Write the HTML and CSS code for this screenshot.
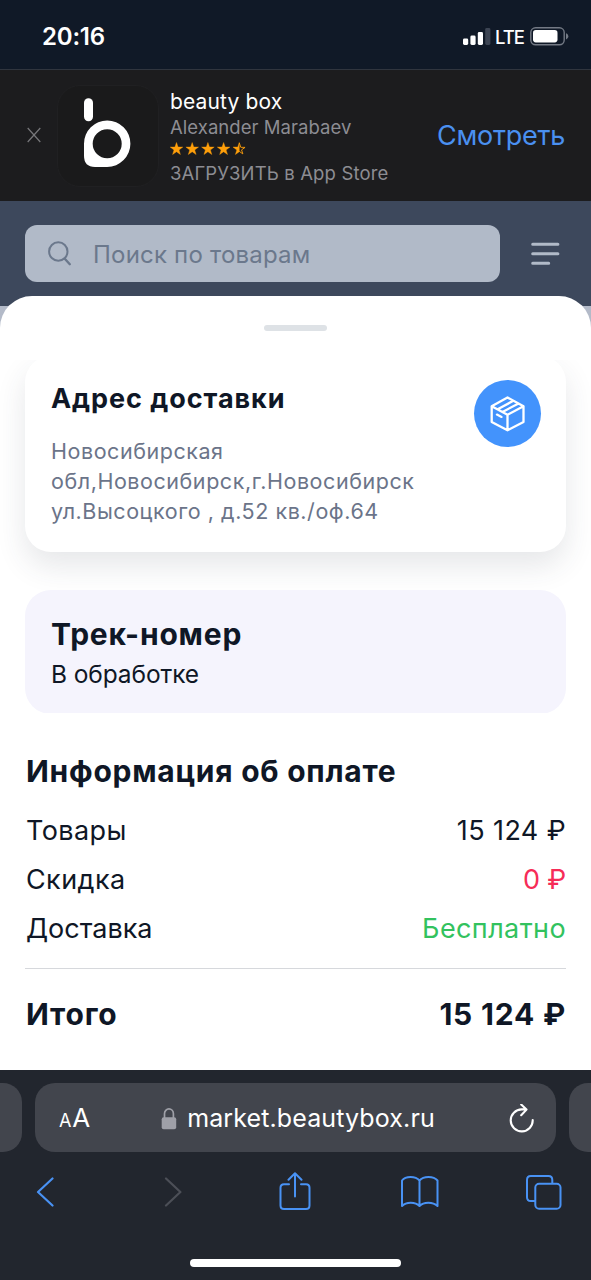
FILE: index.html
```html
<!DOCTYPE html>
<html lang="ru">
<head>
<meta charset="utf-8">
<title>beauty box</title>
<link rel="stylesheet" href="styles.css">
</head>
<body>
<div class="phone">
  <header class="status">
    <span class="clock">20:16</span>
    <div class="indicators">
      <svg class="signal" width="28" height="18" viewBox="0 0 28 18">
        <rect x="0" y="10.5" width="5.2" height="6.5" rx="1.4" fill="#fff"/>
        <rect x="7.4" y="7.5" width="5.2" height="9.5" rx="1.4" fill="#fff"/>
        <rect x="14.8" y="4" width="5.2" height="13" rx="1.4" fill="#fff"/>
        <rect x="22.2" y="0" width="5.2" height="17" rx="1.4" fill="#3c4453"/>
      </svg>
      <span class="network">LTE</span>
      <svg class="battery" width="39" height="19" viewBox="0 0 39 19">
        <rect x=".8" y=".8" width="33.4" height="17" rx="4.8" fill="none" stroke="#747a85" stroke-width="1.4"/>
        <rect x="3" y="3" width="24.5" height="12.4" rx="2.8" fill="#fff"/>
        <path d="M36 6.2c1.6.6 2.3 1.8 2.3 3.1s-.7 2.5-2.3 3.1z" fill="#747a85"/>
      </svg>
    </div>
  </header>

  <section class="banner">
    <svg class="close" width="14" height="16" viewBox="0 0 14 16"><path d="M.7 1l12.6 14M13.3 1L.7 15" stroke="#77777a" stroke-width="1.2" fill="none"/></svg>
    <div class="app-icon">
      <svg width="100" height="100" viewBox="0 0 100 100">
        <rect x="26" y="12.200" width="9" height="23" rx="4.500" fill="#fff"/>
        <path fill="#fff" fill-rule="evenodd" d="M49.200 34.500a23.200 23.200 0 0 1 0 46.400H37Q26 80.900 26 69.700V57.700A23.200 23.200 0 0 1 49.200 34.500zM49.200 43.200a14.500 14.500 0 1 0 0 29a14.500 14.500 0 1 0 0-29z"/>
      </svg>
    </div>
    <div class="app-info">
      <div class="app-name">beauty box</div>
      <div class="app-author">Alexander Marabaev</div>
      <svg class="stars" width="77" height="14" viewBox="0 0 77 14" fill="#ff9f0a" stroke="#ff9f0a" stroke-width=".4">
        <defs><path id="star" d="M6.500 .5l1.550 4.500 4.750.1-3.800 2.850 1.400 4.550-3.900-2.750-3.900 2.750L4 7.950.2 5.100l4.750-.1z"/></defs>
        <use href="#star"/>
        <use href="#star" x="15.700"/>
        <use href="#star" x="31.400"/>
        <use href="#star" x="47.100"/>
        <path transform="translate(62.800)" d="M6.500.5v9.250l-3.900 2.750L4 7.950.2 5.100l4.750-.1z"/>
        <path transform="translate(62.800)" d="M6.500.9l1.450 4.400 4.300.1-3.500 2.500 1.300 4-3.550-2.500" fill="none" stroke-width=".9"/>
      </svg>
      <div class="app-store">ЗАГРУЗИТЬ в App Store</div>
    </div>
    <div class="view">Смотреть</div>
  </section>

  <main class="page">
    <div class="topbar">
      <div class="search">
        <svg width="24" height="26" viewBox="0 0 24 26" fill="none" stroke="#6b788c" stroke-linecap="round"><circle cx="10.300" cy="10.500" r="9.200" stroke-width="2"/><path d="M17 18l4.800 5.200" stroke-width="2.400"/></svg>
        <span>Поиск по товарам</span>
      </div>
      <svg class="menu" width="29" height="24" viewBox="0 0 29 24" stroke="#b1bac8" stroke-width="3" stroke-linecap="round"><path d="M1.700 2.300h25.200M1.700 11.800h25.200M1.700 21.300h16"/></svg>
    </div>

    <div class="sheet">
      <div class="handle"></div>
      <div class="card-clip">
        <section class="address">
          <div class="address-text">
            <h2>Адрес доставки</h2>
            <p>Новосибирская обл,Новосибирск,г.Новосибирск ул.Высоцкого , д.52 кв./оф.64</p>
          </div>
          <div class="badge">
            <svg width="36" height="36" viewBox="0 0 36 36" fill="none" stroke="#fff" stroke-width="2.300" stroke-linejoin="round" stroke-linecap="round">
              <path d="M17.500 1.500L33.500 10.200V26L17.500 34.300 1.700 26V10.200zM1.700 10.200L17.500 18.800 33.500 10.200M17.500 18.800V34.300M7.700 13.200L23.300 4.800M12.500 15.900L28.500 7.600M7 18.600l4.500 2.300"/>
            </svg>
          </div>
        </section>
        <section class="track">
          <h2>Трек-номер</h2>
          <p>В обработке</p>
        </section>
      </div>

      <section class="payment">
        <h2>Информация об оплате</h2>
        <div class="line"><span>Товары</span><span>15 124 ₽</span></div>
        <div class="line"><span>Скидка</span><span class="discount">0 ₽</span></div>
        <div class="line"><span class="snug">Доставка</span><span class="free">Бесплатно</span></div>
        <div class="total"><span>Итого</span><span>15 124 ₽</span></div>
      </section>
    </div>
  </main>

  <footer class="browser">
    <div class="tabs">
      <div class="side-tab left"></div>
      <div class="url">
        <div class="aa"><small>A</small>A</div>
        <div class="domain">
          <svg width="16" height="22" viewBox="0 0 16 22"><rect x=".7" y="9.300" width="14.500" height="12" rx="2" fill="#9fa0a8"/><path d="M3.500 10V5.800a4.450 4.900 0 0 1 8.900 0V10" fill="none" stroke="#9fa0a8" stroke-width="1.700"/></svg>
          <span>market.beautybox.ru</span>
        </div>
        <svg class="reload" width="26" height="30" viewBox="0 0 26 30" fill="none" stroke="#fff" stroke-width="2.100" stroke-linecap="round" stroke-linejoin="round"><path d="M18 5.400H13.700A11 11 0 1 0 24.700 16M13.200 0.500l5.300 5.100-5.300 5.600"/></svg>
      </div>
      <div class="side-tab right"></div>
    </div>
    <nav class="tools">
      <svg class="back" width="18" height="30" viewBox="0 0 18 30" fill="none" stroke="#4992f4" stroke-width="2.200" stroke-linecap="round" stroke-linejoin="round"><path d="M16.500 1.500L2 15l14.500 13.500"/></svg>
      <svg class="forward" width="18" height="30" viewBox="0 0 18 30" fill="none" stroke="#4c4f57" stroke-width="2.200" stroke-linecap="round" stroke-linejoin="round"><path d="M2 1.500L16.400 15 2 28.500"/></svg>
      <svg class="share" width="32" height="40" viewBox="0 0 32 40" fill="none" stroke="#4992f4" stroke-width="2" stroke-linecap="round" stroke-linejoin="round"><path d="M10 12.200H5q-3.500 0-3.500 3.500V33.500q0 3.500 3.500 3.500H27q3.500 0 3.500-3.500V15.700q0-3.500-3.500-3.500H22M16 24.500V1.500M9.500 7.800L16 1.300l6.500 6.500"/></svg>
      <svg class="books" width="40" height="34" viewBox="0 0 40 34" fill="none" stroke="#4992f4" stroke-width="2" stroke-linejoin="round"><path d="M19.500 5.500C15.500.9 5.500.9 2 5.500V31C6 26.500 15.500 26.500 19.500 31C23.500 26.500 33 26.500 37.500 31V5.500C33.500.9 23.500.9 19.500 5.500zV31"/></svg>
      <svg width="38" height="38" viewBox="0 0 38 38" fill="none" stroke="#4992f4" stroke-width="2"><rect x="10.300" y="10.800" width="25.200" height="24.900" rx="3.800"/><path d="M10.300 28H5.800Q2 28 2 24.200V7Q2 3 5.800 3H23.500Q27.300 3 27.300 7v3.800"/></svg>
    </nav>
    <div class="home"></div>
  </footer>
</div>
</body>
</html>
```

FILE: styles.css
```css
* { box-sizing: border-box; }
body { margin: 0; font-family: Inter, "Liberation Sans", sans-serif; }
h2, p { margin: 0; }
svg { display: block; flex: none; }

.phone { width: 591px; height: 1280px; display: flex; flex-direction: column; overflow: hidden; white-space: nowrap; }

.status { height: 70px; flex: none; display: flex; justify-content: space-between; padding: 21px 22px 0 42px; background: #101927; border-bottom: 1px solid #30353e; color: #fff; }
.clock { font-size: 24px; line-height: 31px; font-weight: 600; letter-spacing: -.2px; }
.indicators { display: flex; align-items: flex-start; padding-top: 6px; }
.signal { margin-top: 1px; }
.network { width: 28px; margin: 0 7px 0 4px; font-size: 18.500px; line-height: 20px; font-weight: 500; letter-spacing: -1px; }

.banner { height: 131px; flex: none; display: flex; padding: 0 26px 0 27px; background: #1c1c1e; color: #fff; }
.close { margin: 57px 16px 0 0; }
.app-icon { width: 102px; height: 102px; margin-top: 15px; border: 1px solid #202022; border-radius: 23px; background: #1a1a1b; flex: none; }
.app-info { flex: 1; padding: 19px 0 0 11px; color: #8d8d93; font-size: 18.500px; }
.app-name { font-size: 21px; line-height: 26px; letter-spacing: .15px; color: #fff; }
.app-author { line-height: 25px; letter-spacing: .05px; }
.stars { margin-top: 2px; }
.app-store { line-height: 26px; margin-top: 4px; letter-spacing: .14px; }
.view { padding-top: 50px; font-size: 27px; line-height: 32px; letter-spacing: -.25px; color: #4a90f0; }

.page { height: 869px; flex: none; display: flex; flex-direction: column; background: linear-gradient(#3d485c 105px, #b3bac8 105px); }
.topbar { height: 95px; display: flex; padding: 24px 31px 0 25px; justify-content: space-between; }
.search { width: 475px; height: 57px; display: flex; border-radius: 12px; padding: 16px 0 0 23px; background: #b1bac8; color: #6b788c; font-size: 24px; line-height: 28px; letter-spacing: .2px; }
.search span { margin-left: 21px; }
.menu { margin-top: 17px; }

.sheet { flex: 1; border-radius: 32px 32px 0 0; background: #fff; color: #0f1726; }
.handle { width: 63px; height: 6px; margin: 29px auto 0; border-radius: 3px; background: #dee2e6; }
.card-clip { height: 357px; margin-top: 25px; padding: 0 25px; clip-path: inset(4px 0 0 0); }
.address { height: 196px; display: flex; justify-content: space-between; padding: 24px 25px 0 26px; border-radius: 26px; background: #fff; box-shadow: 0 14px 30px rgba(50, 55, 75, .12); }
.address h2 { font-size: 27px; line-height: 38px; letter-spacing: .95px; }
.address p { width: 375px; margin-top: 18px; font-size: 21.500px; line-height: 30px; letter-spacing: .55px; color: #6b7489; white-space: normal; }
.badge { width: 67px; height: 67px; display: flex; align-items: center; justify-content: center; border-radius: 50%; background: #4393fc; }
.track { height: 124px; margin-top: 38px; padding: 24px 26px 0; border-radius: 26px; background: #f5f4fd; }
.track h2 { font-size: 30px; line-height: 40px; letter-spacing: .8px; }
.track p { font-size: 24.500px; line-height: 40px; letter-spacing: -.1px; }
.payment { padding: 38px 25px 0 26px; font-size: 27px; letter-spacing: .4px; }
.payment h2 { font-size: 30px; line-height: 40px; letter-spacing: .74px; margin-bottom: 15px; }
.line, .total { display: flex; justify-content: space-between; }
.line { line-height: 49px; }
.snug { letter-spacing: 0; }
.discount { color: #f62c57; letter-spacing: -.2px; }
.free { color: #32c25e; }
.total { margin: 15px 0 0 -1px; padding: 25px 0 0 1px; border-top: 1px solid #d6d8dc; font-size: 30px; line-height: 40px; font-weight: 700; letter-spacing: .8px; }

.browser { flex: 1; background: #22262e; color: #fff; }
.tabs { display: flex; justify-content: space-between; padding-top: 13px; }
.side-tab { width: 22px; height: 69px; background: #42454d; }
.left { border-radius: 0 19px 19px 0; }
.right { border-radius: 19px 0 0 19px; }
.url { width: 521px; height: 69px; display: flex; align-items: center; justify-content: space-between; padding: 2px 22px 0 24px; border-radius: 20px; background: #42454d; }
.aa { padding-top: 2px; font-size: 26px; line-height: 32px; letter-spacing: -.2px; }
.aa small { font-size: 18px; letter-spacing: .8px; }
.domain { display: flex; align-items: center; gap: 10px; padding-right: 2px; font-size: 25px; line-height: 30px; letter-spacing: .12px; }
.domain span { margin-top: -1px; }
.tools { height: 80px; display: flex; align-items: center; padding-left: 36px; }
.back { margin-right: 110px; }
.forward { margin-right: 97px; }
.share { margin-right: 89px; }
.books { margin-right: 85px; }
.home { width: 211px; height: 8px; margin: 27px auto 0; border-radius: 4px; background: #fff; }
```
